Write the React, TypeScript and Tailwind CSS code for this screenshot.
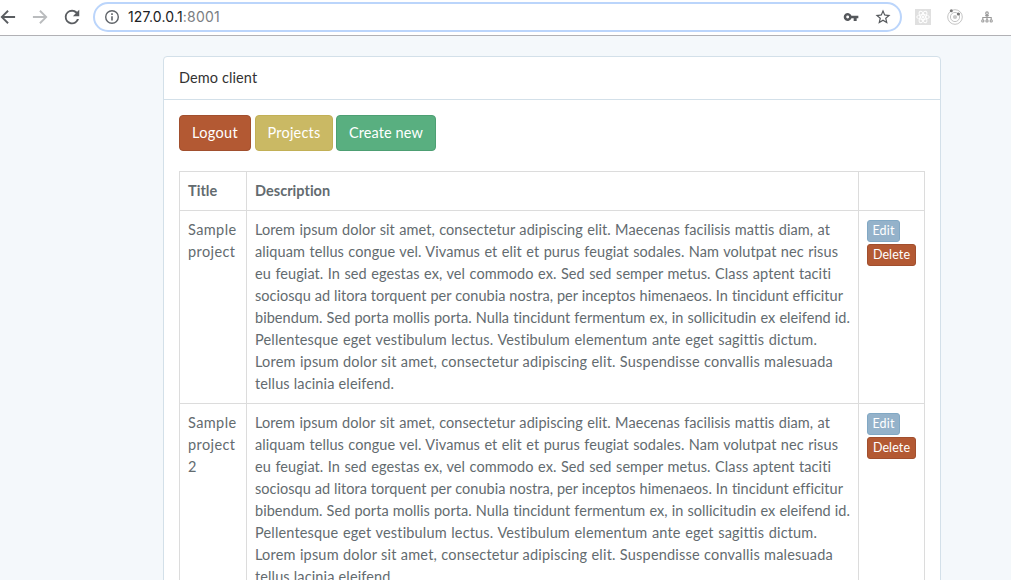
import React from "react";

const lines = [
  { text: "Lorem ipsum dolor sit amet, consectetur adipiscing elit. Maecenas facilisis mattis diam, at", width: "w-[575px] tracking-[0.08px]" },
  { text: "aliquam tellus congue vel. Vivamus et elit et purus feugiat sodales. Nam volutpat nec risus", width: "w-[583px] tracking-[0.08px]" },
  { text: "eu feugiat. In sed egestas ex, vel commodo ex. Sed sed semper metus. Class aptent taciti", width: "w-[576px] tracking-[0.08px]" },
  { text: "sociosqu ad litora torquent per conubia nostra, per inceptos himenaeos. In tincidunt efficitur", width: "w-[588px] tracking-[0.02px]" },
  { text: "bibendum. Sed porta mollis porta. Nulla tincidunt fermentum ex, in sollicitudin ex eleifend id.", width: "w-[595px] tracking-[0.05px]" },
  { text: "Pellentesque eget vestibulum lectus. Vestibulum elementum ante eget sagittis dictum.", width: "w-[562px] tracking-[0.16px]" },
  { text: "Lorem ipsum dolor sit amet, consectetur adipiscing elit. Suspendisse convallis malesuada", width: "w-[578px] tracking-[0.2px]" },
  { text: "tellus lacinia eleifend.", width: "w-[139px] tracking-[0.12px]" },
];

const projects = [
  { id: 1, title: ["Sample", "project"] },
  { id: 2, title: ["Sample", "project", "2"] },
];

function AddressBar() {
  return (
    <header className="flex h-9 shrink-0 items-center border-b border-[#b1b1b5] bg-white pb-px">
      <svg className="-ml-[2px] h-5 w-5 shrink-0" viewBox="0 0 24 24" fill="#5a5d61">
        <path d="M20.5 10.800v2.400H7.300l5.600 5.500-1.600 1.700L3 12l8.300-8.400 1.600 1.700-5.600 5.500z" />
      </svg>
      <svg className="ml-[12px] h-5 w-5 shrink-0" viewBox="0 0 24 24" fill="#babcbe">
        <path d="M3.500 10.800v2.400h13.200l-5.600 5.500 1.600 1.700L21 12l-8.300-8.400-1.600 1.700 5.600 5.500z" />
      </svg>
      <svg className="ml-[12px] h-5 w-5 shrink-0" viewBox="0 0 24 24" fill="#5a5d61">
        <path d="M18.200 5.800A8.700 8.700 0 0 0 12 3.300a8.700 8.700 0 1 0 8.400 11h-2.500A6.400 6.400 0 1 1 12 5.600c1.800 0 3.400.7 4.500 1.900L13.100 11H20.700V3.300z" />
      </svg>
      <div className="ml-[11px] flex h-[30px] w-[809px] shrink-0 items-center rounded-full border-2 border-[#bbd5fb] bg-white pr-[8px] pl-[9px]">
        <svg className="h-4 w-4 shrink-0" viewBox="0 0 16 16" fill="none" stroke="#5f6368" strokeWidth="1.4">
          <circle cx="8" cy="8" r="6.3" />
          <path d="M8 7.200v4.300M8 4.300v1.600" strokeWidth="1.600" />
        </svg>
        <div className="ml-[8px] font-['Inter','Liberation_Sans',sans-serif] text-[14px] leading-5 tracking-[0.18px] text-[#7b7e82]">
          <span className="text-[#202124]">127.0.0.1</span>:8001
        </div>
        <svg className="ml-auto h-4 w-4 shrink-0" viewBox="0 0 24 24" fill="#55585c">
          <path d="M12.700 10a6 6 0 1 0 0 4H16v4h4.500v-4H23v-4zM7 14.200a2.200 2.200 0 1 1 0-4.400 2.200 2.200 0 0 1 0 4.400z" />
        </svg>
        <svg className="ml-[15px] h-[18px] w-[18px] shrink-0" viewBox="0 0 24 24" fill="#55585c">
          <path d="M22 9.240l-7.190-.62L12 2 9.190 8.630 2 9.240l5.460 4.730L5.820 21 12 17.270 18.180 21l-1.630-7.030L22 9.240zM12 15.400l-3.760 2.270 1-4.280-3.320-2.880 4.380-.38L12 6.100l1.710 4.040 4.380.38-3.320 2.880 1 4.280L12 15.400z" />
        </svg>
      </div>
      <svg className="ml-[13px] h-4 w-4 shrink-0" viewBox="0 0 16 16" fill="none" stroke="#fff" strokeWidth="1">
        <path d="M0 0h16v16H0z" fill="#e0e0e0" stroke="none" />
        <ellipse cx="8" cy="8" rx="6.300" ry="2.400" />
        <ellipse cx="8" cy="8" rx="6.300" ry="2.400" transform="rotate(60 8 8)" />
        <ellipse cx="8" cy="8" rx="6.300" ry="2.400" transform="rotate(120 8 8)" />
        <circle cx="8" cy="8" r="1" fill="#fff" />
      </svg>
      <svg className="ml-[16px] h-4 w-4 shrink-0" viewBox="0 0 16 16" fill="none" stroke="#c4c4c4">
        <circle cx="8" cy="8" r="7.300" strokeWidth="1" />
        <circle cx="8" cy="8" r="4.600" strokeWidth="1" />
        <circle cx="8" cy="8" r="2.100" fill="#c9c9c9" stroke="none" />
        <circle cx="4.300" cy="1.700" r="1.500" fill="#777" stroke="none" />
        <circle cx="11.400" cy="5" r="1.600" fill="#777" stroke="none" />
      </svg>
      <svg className="ml-[18px] h-3 w-3 shrink-0" viewBox="0 0 12 12" fill="none" stroke="#999" strokeWidth="1.100">
        <circle cx="6" cy="2.200" r="1.300" />
        <path d="M6 3.500V9M1.800 8.800V6.500h8.400v2.300M4.200 4.600h3.600" />
        <circle cx="1.800" cy="9.900" r="1.100" />
        <circle cx="6" cy="9.900" r="1.100" />
        <circle cx="10.200" cy="9.900" r="1.100" />
      </svg>
    </header>
  );
}

function ProjectRow({ title }: { title: string[] }) {
  return (
    <tr className="align-top">
      <td className="border-r border-b border-[#dcdcdc] py-2 pr-0 pl-2 tracking-[0.4px]">
        {title.map((word) => (
          <div key={word}>{word}</div>
        ))}
      </td>
      <td className="border-r border-b border-[#dcdcdc] p-2">
        {lines.map(({ text, width }) => (
          <div key={text} className={`${width} whitespace-nowrap [text-align-last:justify]`}>
            {text}
          </div>
        ))}
      </td>
      <td className="border-r border-b border-[#dcdcdc] py-[9px] pl-2">
        <div className="flex flex-col items-start gap-[2px] text-[12.5px] text-white">
          <button className="flex h-[22px] w-[33px] justify-center rounded-[3px] border border-[#81a8c4] bg-[#94b2ca] leading-5 tracking-[0.2px]">
            Edit
          </button>
          <button className="flex h-[22px] w-[49px] justify-center rounded-[3px] border border-[#a14f2e] bg-[#b35933] leading-5 tracking-[0.1px]">
            Delete
          </button>
        </div>
      </td>
    </tr>
  );
}

export default function App() {
  return (
    <div className="flex h-[580px] w-[1011px] flex-col overflow-hidden bg-[#f4f8fb] font-['Lato','Liberation_Sans',sans-serif] text-[14.5px] leading-[22px] text-[#636b6f]">
      <AddressBar />
      <main className="ml-[163px] w-[778px] pt-5">
        <section className="rounded-[4px] border border-[#d3e0e9] bg-white">
          <h1 className="h-[43px] border-b border-[#d3e0e9] px-[15px] py-[10px] tracking-[0.1px] text-[#333]">
            Demo client
          </h1>
          <div className="px-[15px] py-[15px]">
            <nav className="flex text-white">
              <button className="h-9 w-[72px] rounded-[4px] border border-[#a14f2e] bg-[#b35933] tracking-[0.3px]">Logout</button>
              <button className="ml-1 h-9 w-[78px] rounded-[4px] border border-[#c2b056] bg-[#cab964] tracking-[0.2px]">Projects</button>
              <button className="ml-[3px] h-9 w-[100px] rounded-[4px] border border-[#4d9f73] bg-[#59af80] tracking-[0.1px]">
                Create new
              </button>
            </nav>
            <table className="mt-5 w-[746px] table-fixed border-separate border-spacing-0 border-t border-l border-[#dcdcdc] text-left">
              <colgroup>
                <col className="w-[67px]" />
                <col className="w-[612px]" />
                <col className="w-[66px]" />
              </colgroup>
              <thead>
                <tr className="h-[39px] tracking-[0.03px]">
                  <th className="border-r border-b border-[#dcdcdc] p-2 font-bold">Title</th>
                  <th className="border-r border-b border-[#dcdcdc] p-2 font-bold">Description</th>
                  <th className="border-r border-b border-[#dcdcdc] p-2" />
                </tr>
              </thead>
              <tbody>
                {projects.map((project) => (
                  <ProjectRow key={project.id} title={project.title} />
                ))}
              </tbody>
            </table>
          </div>
        </section>
      </main>
    </div>
  );
}
